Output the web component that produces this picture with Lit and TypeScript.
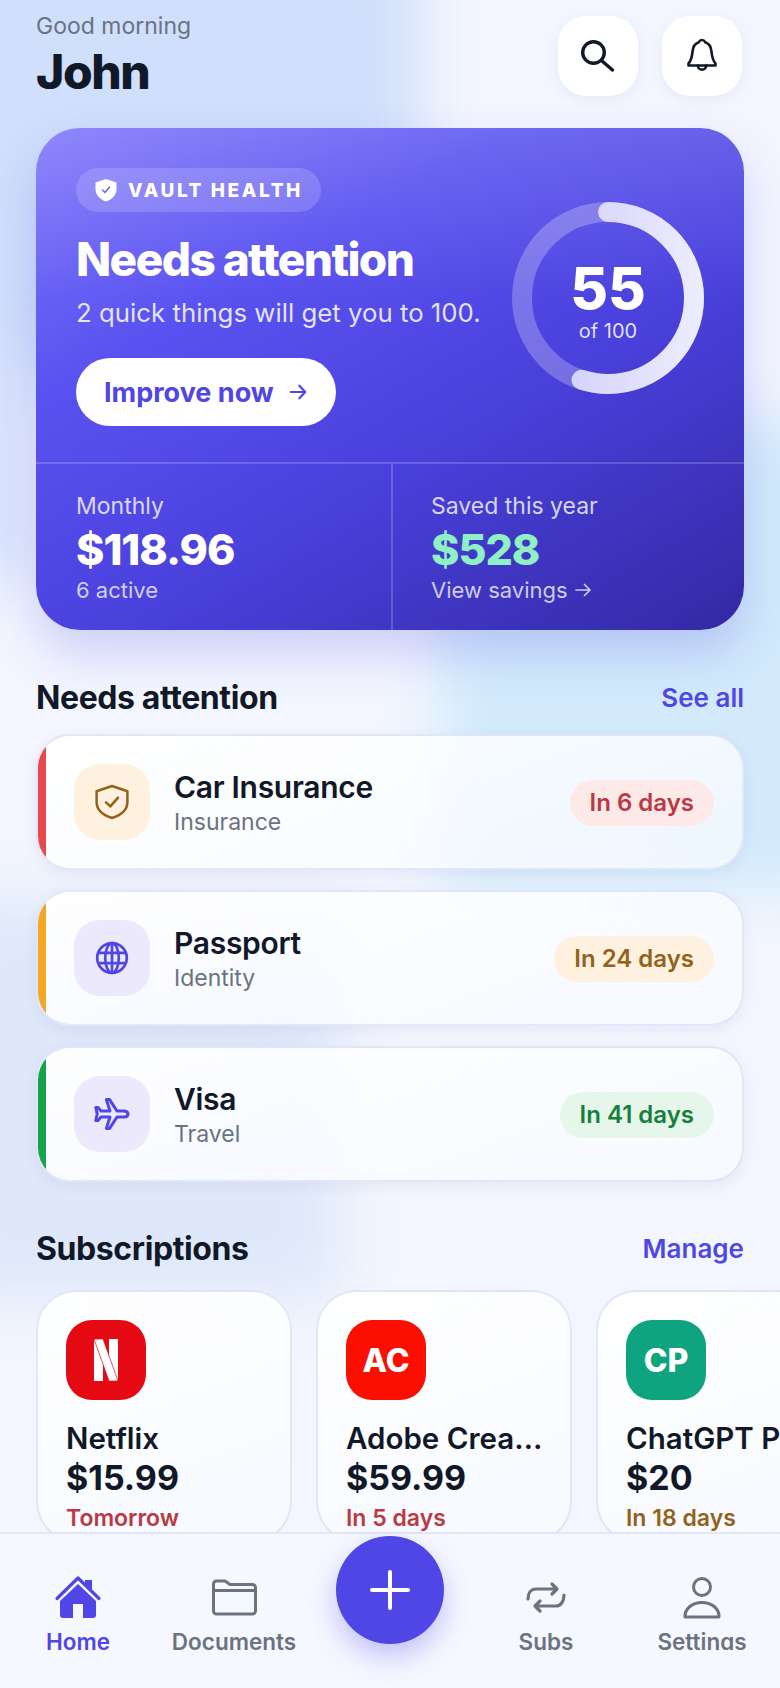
import { LitElement, html, css, svg } from "lit";
import { customElement } from "lit/decorators.js";

const rows = [
  { title: "Car Insurance", sub: "Insurance", days: "In 6 days", tone: "red", icon: "shield" },
  { title: "Passport", sub: "Identity", days: "In 24 days", tone: "amber", icon: "globe" },
  { title: "Visa", sub: "Travel", days: "In 41 days", tone: "green", icon: "plane" },
];

const subs = [
  { name: "Netflix", price: "$15.99", due: "Tomorrow", tone: "red", logo: "n", mark: "" },
  { name: "Adobe Creative Cloud", price: "$59.99", due: "In 5 days", tone: "red", logo: "ac", mark: "AC" },
  { name: "ChatGPT Plus", price: "$20", due: "In 18 days", tone: "amber", logo: "cp", mark: "CP" },
];

const rowIcons: Record<string, unknown> = {
  shield: svg`<path d="M12 4 L19.7 6.6 V12 C19.7 15.8 16.4 18.6 12 20 C7.6 18.6 4.3 15.8 4.3 12 V6.6 Z" fill="none" stroke="currentColor" stroke-width="1.25" stroke-linejoin="round"/><path d="M9 12.2 L11.2 14.2 L15 9.8" fill="none" stroke="currentColor" stroke-width="1.25" stroke-linecap="round" stroke-linejoin="round"/>`,
  globe: svg`<g fill="none" stroke="currentColor" stroke-width="1.35"><circle cx="12" cy="12" r="7.4"/><ellipse cx="12" cy="12" rx="3.4" ry="7.4"/><path d="M12 4.6 V19.4 M5 9.4 H19 M5 14.6 H19"/></g>`,
  plane: svg`<path d="M20 12 C20 11 19 10.5 17.8 10.5 H14.5 L10.8 4.8 H9.2 L11 10.5 H6.5 L5 8.7 H3.9 L4.6 12 L3.9 15.3 H5 L6.5 13.5 H11 L9.2 19.2 H10.8 L14.5 13.5 H17.8 C19 13.5 20 13 20 12 Z" fill="none" stroke="currentColor" stroke-width="1.5" stroke-linejoin="round"/>`,
};

@customElement("app-root")
export class AppRoot extends LitElement {
  static styles = css`
    :host {
      display: flex;
      flex-direction: column;
      position: relative;
      width: 780px;
      height: 1688px;
      overflow: hidden;
      background: #f3f6fe;
      font-family: Inter, "Liberation Sans", sans-serif;
      color: #111827;
    }
    .bg { position: absolute; inset: 0; overflow: hidden; }
    .blob { position: absolute; filter: blur(28px); }
    .b1 { left: -60px; top: -60px; width: 480px; height: 440px; background: #d0dffb; }
    .b1b { left: -60px; top: 340px; width: 90px; height: 240px; background: #d4e0fb; }
    .b2 { left: 440px; top: 420px; width: 400px; height: 470px; background: #d2eafb; }
    .b3 { left: -60px; top: 900px; width: 400px; height: 400px; background: #dfe8fa; }
    main { position: relative; flex: 1; min-height: 0; overflow: hidden; }
    header {
      display: flex;
      justify-content: space-between;
      padding: 16px 38px 0 36px;
      height: 80px;
    }
    .hello { font-size: 23px; line-height: 22px; color: #6b7280; margin-top: -1px; }
    .name { font-size: 48px; line-height: 56px; font-weight: 800; letter-spacing: -1.4px; color: #111827; margin-top: 7px; }
    .tools { display: flex; gap: 24px; }
    .tool {
      width: 80px; height: 80px; border-radius: 28px; background: #fff;
      display: flex; align-items: center; justify-content: center;
      box-shadow: 0 4px 14px rgba(70, 80, 150, 0.07);
    }
    .hero {
      margin: 32px 36px 0;
      height: 502px;
      border-radius: 44px;
      overflow: hidden;
      color: #fff;
      background:
        linear-gradient(180deg, rgba(255,255,255,.13), rgba(255,255,255,0) 34%),
        linear-gradient(150deg, #7f76fb 0%, #5a52f0 30%, #4a40dc 60%, #3329a4 100%);
      box-shadow: 0 24px 48px rgba(79, 70, 229, 0.22);
    }
    .hero-top { display: flex; justify-content: space-between; padding: 40px 40px 0; box-sizing: border-box; border-bottom: 2px solid rgba(255,255,255,.18); height: 336px; }
    .eyebrow {
      display: inline-flex; align-items: center; gap: 10px; height: 44px; padding: 0 18px;
      border-radius: 22px; background: rgba(255,255,255,.16);
      font-size: 19px; font-weight: 800; letter-spacing: 2.6px;
    }
    .hero-title { font-size: 46px; line-height: 56px; font-weight: 800; letter-spacing: -1.6px; margin-top: 19px; }
    .hero-sub { font-size: 25.8px; line-height: 34px; margin-top: 9px; color: rgba(255,255,255,.85); white-space: nowrap; }
    .cta {
      display: inline-flex; align-items: center; gap: 14px; height: 68px; padding: 0 28px;
      border-radius: 34px; background: #fff; color: #4f46e5; font-size: 27px; font-weight: 700; margin-top: 28px;
    }
    .ring { position: relative; width: 192px; height: 192px; margin: 34px 0 0; flex: none; }
    .ring-label { position: absolute; inset: 0; display: flex; flex-direction: column; align-items: center; justify-content: center; padding-top: 6px; box-sizing: border-box; }
    .score { font-size: 58px; line-height: 60px; font-weight: 800; }
    .of { font-size: 20px; line-height: 26px; color: rgba(255,255,255,.85); }
    .stats { display: grid; grid-template-columns: 355px 1fr; height: 166px; }
    .stat { padding: 27px 0 0 40px; box-sizing: border-box; }
    .stat + .stat { border-left: 2px solid rgba(255,255,255,.18); padding-left: 38px; }
    .stat-label { font-size: 23px; line-height: 30px; color: rgba(255,255,255,.8); }
    .stat-value { font-size: 43px; line-height: 50px; font-weight: 800; letter-spacing: -1px; margin-top: 3px; }
    .stat-value.good { color: #8ef0c3; }
    .stat-sub { font-size: 22px; line-height: 30px; margin-top: 1px; color: rgba(255,255,255,.75); display: flex; align-items: center; gap: 6px; }
    .sec {
      display: flex; justify-content: space-between; align-items: center;
      margin: 47px 36px 17px; height: 40px;
    }
    .sec.second { margin-top: 46px; margin-bottom: 22px; }
    .sec h2 { margin: 0; font-size: 32px; font-weight: 700; letter-spacing: -0.4px; color: #111827; }
    .sec a { font-size: 26px; font-weight: 600; color: #4f46e5; }
    .list { display: flex; flex-direction: column; gap: 20px; margin: 0 36px; }
    .row {
      display: flex; align-items: center; height: 136px; box-sizing: border-box;
      border: 2px solid rgba(205, 214, 238, .55); border-radius: 34px; overflow: hidden;
      background: linear-gradient(160deg, rgba(255,255,255,.96), rgba(247,250,255,.72));
      box-shadow: 0 4px 14px rgba(60, 70, 140, .08);
    }
    .bar { width: 8px; align-self: stretch; flex: none; }
    .bar.red { background: #e5484d; }
    .bar.amber { background: #f5a623; }
    .bar.green { background: #16a34a; }
    .tile {
      width: 76px; height: 76px; border-radius: 26px; margin-left: 28px; flex: none;
      display: flex; align-items: center; justify-content: center;
      background: #ece9fd; color: #4f46e5;
    }
    .tile.warm { background: #fff1e0; color: #92621a; }
    .row-text { flex: 1; margin-left: 24px; padding-top: 2px; }
    .row-title { font-size: 30px; line-height: 36px; font-weight: 600; letter-spacing: -0.3px; color: #111827; }
    .row-sub { font-size: 23px; line-height: 30px; color: #6b7280; margin-top: 2px; }
    .pill { height: 46px; line-height: 46px; border-radius: 23px; padding: 0 20px; font-size: 24px; font-weight: 600; margin: 2px 28px 0 0; }
    .pill.red { background: #fee9e9; color: #b93a44; }
    .pill.amber { background: #fff1e0; color: #92621a; }
    .pill.green { background: #e6f6ea; color: #15803d; }
    .subs { display: flex; gap: 24px; margin-left: 36px; width: 1000px; }
    .sub {
      width: 256px; height: 252px; box-sizing: border-box; flex: none; padding: 28px;
      border: 2px solid rgba(205, 214, 238, .55); border-radius: 40px;
      background: linear-gradient(160deg, rgba(255,255,255,.96), rgba(247,250,255,.72));
    }
    .logo {
      width: 80px; height: 80px; border-radius: 26px; display: flex; align-items: center; justify-content: center;
      color: #fff; font-size: 32px; font-weight: 800;
    }
    .logo.n { background: #e50914; }
    .logo.ac { background: #fa0f00; }
    .logo.cp { background: #10a37f; }
    .sub-name { font-size: 29.5px; line-height: 36px; font-weight: 600; margin: 20px -4px 0 0; white-space: nowrap; overflow: hidden; text-overflow: ellipsis; }
    .sub:last-child .sub-name { overflow: visible; }
    .sub-price { font-size: 34px; line-height: 42px; font-weight: 700; margin-top: 1px; }
    .sub-due { font-size: 23px; line-height: 30px; font-weight: 600; margin-top: 4px; }
    .sub-due.red { color: #b93a44; }
    .sub-due.amber { color: #92621a; }
    nav {
      position: relative; flex: none; height: 156px; box-sizing: border-box;
      display: grid; grid-template-columns: repeat(5, 156px);
      border-top: 2px solid #e1e7f4; background: #f6f8ff;
    }
    .item { display: flex; flex-direction: column; align-items: center; padding-top: 39px; color: #6b7280; }
    .item.on { color: #4f46e5; }
    .item span { font-size: 22.5px; font-weight: 600; line-height: 26px; height: 21px; overflow: hidden; margin-top: 8px; white-space: nowrap; }
    .item svg { display: block; }
    .fab-cell { display: flex; justify-content: center; padding-top: 2px; }
    .fab {
      width: 108px; height: 108px; border-radius: 50%; background: #4f46e5;
      display: flex; align-items: center; justify-content: center;
      box-shadow: 0 12px 28px rgba(79, 70, 229, .32);
    }
  `;

  render() {
    return html`
      <div class="bg">
        <div class="blob b1"></div><div class="blob b1b"></div><div class="blob b2"></div><div class="blob b3"></div>
      </div>
      <main>
        <header>
          <div>
            <div class="hello">Good morning</div>
            <div class="name">John</div>
          </div>
          <div class="tools">
            <div class="tool">
              <svg width="40" height="40" viewBox="0 0 40 40" fill="none" stroke="#111827" stroke-width="3.4" stroke-linecap="round"><circle cx="15.5" cy="16.5" r="10.8"/><path d="M24 25 L34.5 34"/></svg>
            </div>
            <div class="tool">
              <svg width="40" height="40" viewBox="0 0 40 40" fill="none" stroke="#111827" stroke-width="2.6" stroke-linecap="round" stroke-linejoin="round"><path d="M20 4 C18.4 4 17.4 5 16.8 6.2 C12.6 7.6 11 11 10.6 15 C10.1 20.4 9.4 24.4 6.5 27.5 V29.5 H33.5 V27.5 C30.6 24.4 29.9 20.4 29.4 15 C29 11 27.4 7.6 23.2 6.2 C22.6 5 21.6 4 20 4 Z"/><path d="M15.8 29.5 C15.8 35 24.2 35 24.2 29.5"/></svg>
            </div>
          </div>
        </header>

        <section class="hero">
          <div class="hero-top">
            <div>
              <div class="eyebrow">
                <svg width="24" height="24" viewBox="0 0 24 24"><path d="M12 1 L22.5 4.5 V11 C22.5 17 18 21.5 12 23.5 C6 21.5 1.5 17 1.5 11 V4.5 Z" fill="#fff"/><path d="M8.5 12 L11 14.5 L15.5 9" fill="none" stroke="#6a62ee" stroke-width="1.4" stroke-linecap="round" stroke-linejoin="round"/></svg>
                VAULT HEALTH
              </div>
              <div class="hero-title">Needs attention</div>
              <div class="hero-sub">2 quick things will get you to 100.</div>
              <div class="cta">Improve now
                <svg width="20" height="20" viewBox="0 0 22 22" fill="none" stroke="#4f46e5" stroke-width="2.4" stroke-linecap="round" stroke-linejoin="round"><path d="M3 11 H19 M12.5 4 L19 11 L12.5 18"/></svg>
              </div>
            </div>
            <div class="ring">
              <svg width="192" height="192" viewBox="0 0 192 192">
                <defs><linearGradient id="rg" gradientUnits="userSpaceOnUse" x1="96" y1="0" x2="96" y2="192"><stop offset="0" stop-color="#cbc7fb"/><stop offset="1" stop-color="#eeedfd"/></linearGradient></defs>
                <circle cx="96" cy="96" r="86" fill="none" stroke="rgba(255,255,255,.25)" stroke-width="20"/>
                <circle cx="96" cy="96" r="86" fill="none" stroke="url(#rg)" stroke-width="20" stroke-linecap="round" pathLength="100" stroke-dasharray="55 100" transform="rotate(-90 96 96)"/>
              </svg>
              <div class="ring-label"><div class="score">55</div><div class="of">of 100</div></div>
            </div>
          </div>
          <div class="stats">
            <div class="stat">
              <div class="stat-label">Monthly</div>
              <div class="stat-value">$118.96</div>
              <div class="stat-sub">6 active</div>
            </div>
            <div class="stat">
              <div class="stat-label">Saved this year</div>
              <div class="stat-value good">$528</div>
              <div class="stat-sub">View savings
                <svg width="18" height="18" viewBox="0 0 18 18" fill="none" stroke="currentColor" stroke-width="1.7" stroke-linecap="round" stroke-linejoin="round"><path d="M2 9 H16 M10.5 3.5 L16 9 L10.5 14.5"/></svg>
              </div>
            </div>
          </div>
        </section>

        <div class="sec"><h2>Needs attention</h2><a>See all</a></div>
        <div class="list">
          ${rows.map((r) => html`
            <div class="row">
              <div class="bar ${r.tone}"></div>
              <div class="tile ${r.icon === "shield" ? "warm" : ""}">
                <svg width="48" height="48" viewBox="0 0 24 24">${rowIcons[r.icon]}</svg>
              </div>
              <div class="row-text">
                <div class="row-title">${r.title}</div>
                <div class="row-sub">${r.sub}</div>
              </div>
              <div class="pill ${r.tone}">${r.days}</div>
            </div>`)}
        </div>

        <div class="sec second"><h2>Subscriptions</h2><a>Manage</a></div>
        <div class="subs">
          ${subs.map((s) => html`
            <div class="sub">
              <div class="logo ${s.logo}">
                ${s.logo === "n"
                  ? html`<svg width="26" height="44" viewBox="0 0 26 44"><rect x="1" y="1" width="9" height="42" fill="#fff"/><rect x="16" y="1" width="9" height="42" fill="#fff"/><path d="M1 1 H10 L25 43 H16 Z" fill="#fff" stroke="#e50914" stroke-width=".7"/></svg>`
                  : s.mark}
              </div>
              <div class="sub-name">${s.name}</div>
              <div class="sub-price">${s.price}</div>
              <div class="sub-due ${s.tone}">${s.due}</div>
            </div>`)}
        </div>
      </main>
      <nav>
        <div class="item on">
          <svg width="48" height="48" viewBox="0 0 48 48" fill="currentColor"><path d="M24 11 L42 28 V42 A3 3 0 0 1 39 45 H29 V31 H19 V45 H9 A3 3 0 0 1 6 42 V28 Z"/><path d="M31 7 H38 V17 L31 11 Z"/><path d="M3 25.5 L24 5 L45 25.5" fill="none" stroke="currentColor" stroke-width="3.2" stroke-linecap="round" stroke-linejoin="round"/></svg>
          <span>Home</span>
        </div>
        <div class="item">
          <svg width="48" height="48" viewBox="0 0 48 48" fill="none" stroke="currentColor" stroke-width="3" stroke-linejoin="round" stroke-linecap="round"><path d="M3.5 11 A3 3 0 0 1 6.5 8 H15 L20 11.5 H42.5 A3 3 0 0 1 45.5 14.5 V38 A3 3 0 0 1 42.5 41 H6.5 A3 3 0 0 1 3.5 38 Z"/><path d="M3.5 17.5 H45.5"/></svg>
          <span>Documents</span>
        </div>
        <div class="fab-cell">
          <div class="fab">
            <svg width="40" height="40" viewBox="0 0 40 40" stroke="#fff" stroke-width="4" stroke-linecap="round"><path d="M20 2 V38 M2 20 H38"/></svg>
          </div>
        </div>
        <div class="item">
          <svg width="48" height="48" viewBox="0 0 48 48" fill="none" stroke="currentColor" stroke-width="3.2" stroke-linecap="round" stroke-linejoin="round"><path d="M6 26 C6 20 9 16 14 16 H35 M30 11 L35 16 L30 21"/><path d="M42 22 C42 28 39 33 34 33 H13 M18 28 L13 33 L18 38"/></svg>
          <span>Subs</span>
        </div>
        <div class="item">
          <svg width="48" height="48" viewBox="0 0 48 48" fill="none" stroke="currentColor" stroke-width="3" stroke-linecap="round" stroke-linejoin="round"><circle cx="24" cy="14" r="8.5"/><path d="M7 44 C6.5 36 14 29.5 24 29.5 C34 29.5 41.5 36 41 44 Z"/></svg>
          <span>Settings</span>
        </div>
      </nav>
    `;
  }
}
